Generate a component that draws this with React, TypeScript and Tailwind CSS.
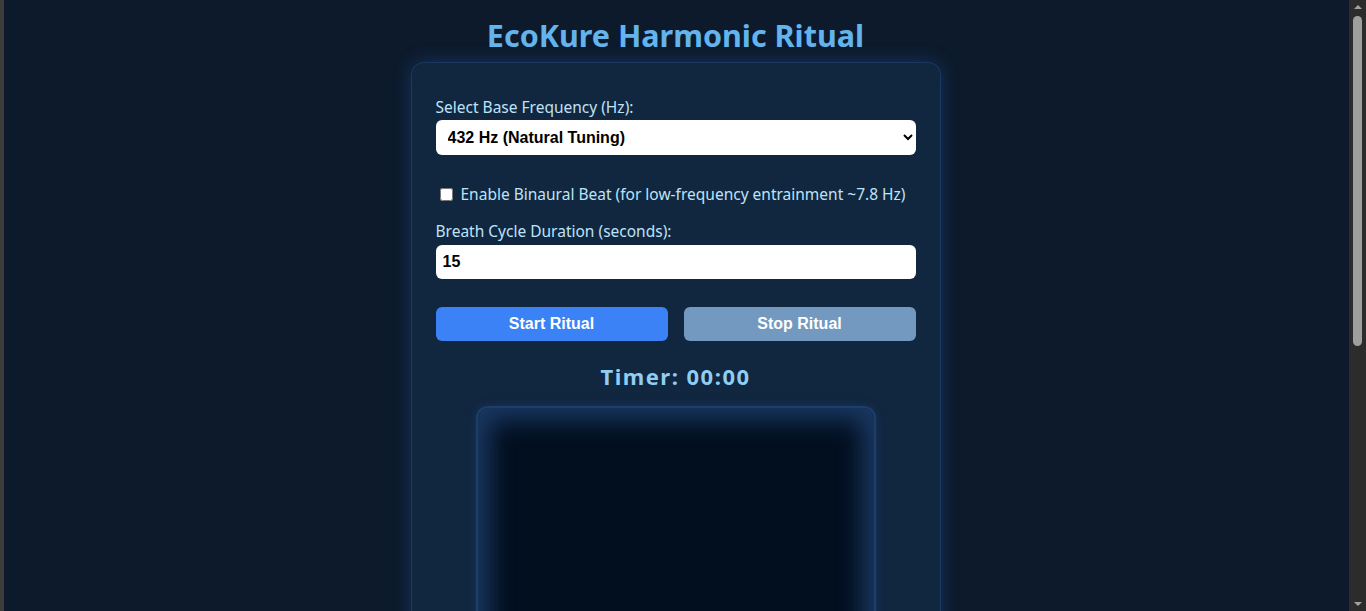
import { useState } from 'react';

// EcoKure 하모닉 의식 패널
const FREQUENCIES = [
  { value: '432', label: '432 Hz (Natural Tuning)' },
  { value: '528', label: '528 Hz (Repair)' },
  { value: '639', label: '639 Hz (Connection)' },
  { value: '741', label: '741 Hz (Cleansing)' },
];

export default function App() {
  const [freq, setFreq] = useState('432');
  const [binaural, setBinaural] = useState(false);
  const [breath, setBreath] = useState('15');

  return (
    <div
      className="min-h-[1068px] bg-[#0c1a2b] border-l-4 border-[#3c3c3c] pr-[19px] pb-10"
      style={{ fontFamily: '"Noto Sans", "Open Sans", sans-serif' }}
    >
      {/* 스크롤바 모양 */}
      <div className="fixed top-0 right-0 flex h-[611px] w-[17px] flex-col items-center bg-[#2c2c2c]">
        <div className="mt-[5px] h-0 w-0 border-x-[4px] border-b-[4px] border-x-transparent border-b-[#a3a3a3]" />
        <div className="mt-[7px] h-[330px] w-[9px] rounded-full bg-[#9f9f9f]" />
        <div className="mt-auto mb-[5px] h-0 w-0 border-x-[4px] border-t-[4px] border-x-transparent border-t-[#a3a3a3]" />
      </div>

      <h1 className="pt-[14px] text-center text-[30.5px] leading-[42px] font-bold text-[#63b3ed]">
        EcoKure Harmonic Ritual
      </h1>

      <div className="mx-auto mt-[7px] w-[528px] rounded-xl bg-[#11263f] px-6 pt-[34px] pb-6 shadow-[0_0_0_1px_rgba(40,80,130,0.45),0_0_20px_rgba(59,130,246,0.28)]">
        <label className="block text-[15.5px] leading-[21px] text-[#bee3f8]">
          Select Base Frequency (Hz):
        </label>
        <select
          value={freq}
          onChange={(e) => setFreq(e.target.value)}
          className="mt-[2px] block h-[35px] w-full rounded-md border-0 bg-white pl-2 pr-2 text-[16px] font-bold text-black"
          style={{ fontFamily: '"Liberation Sans", Arial, sans-serif' }}
        >
          {FREQUENCIES.map((f) => (
            <option key={f.value} value={f.value}>
              {f.label}
            </option>
          ))}
        </select>

        <label className="mt-[29px] flex items-center gap-2 pl-[4px] whitespace-nowrap text-[15.5px] leading-[21px] text-[#bee3f8]">
          <input
            type="checkbox"
            checked={binaural}
            onChange={(e) => setBinaural(e.target.checked)}
            className="h-[13px] w-[13px]"
          />
          Enable Binaural Beat (for low-frequency entrainment ~7.8 Hz)
        </label>

        <label className="mt-[16px] block text-[15.5px] leading-[21px] text-[#bee3f8]">
          Breath Cycle Duration (seconds):
        </label>
        <input
          type="number"
          value={breath}
          onChange={(e) => setBreath(e.target.value)}
          className="mt-[3px] block h-[34px] w-full rounded-md border-0 bg-white px-[7px] text-[16px] font-bold text-black outline-none"
          style={{ fontFamily: '"Liberation Sans", Arial, sans-serif' }}
        />

        <div
          className="mt-[28px] grid grid-cols-2 gap-4"
          style={{ fontFamily: '"Liberation Sans", Arial, sans-serif' }}
        >
          <button className="h-[34px] rounded-md bg-[#3b82f6] text-[16px] font-bold text-white">
            Start Ritual
          </button>
          <button className="h-[34px] rounded-md bg-[#7399c0] text-[16px] font-bold text-white">
            Stop Ritual
          </button>
        </div>

        <div className="mt-[21px] text-center text-[22px] leading-[29px] font-bold tracking-[1.5px] text-[#90cdf4]">
          Timer: 00:00
        </div>

        {/* 호흡 시각화 캔버스 영역 */}
        <div className="mx-auto mt-[15px] h-[400px] w-[400px] rounded-xl border-2 border-[#1c3f69] bg-[#020f1f] shadow-[inset_0_0_24px_12px_rgba(30,64,110,0.85),0_0_10px_rgba(59,130,246,0.18)]" />
      </div>
    </div>
  );
}
